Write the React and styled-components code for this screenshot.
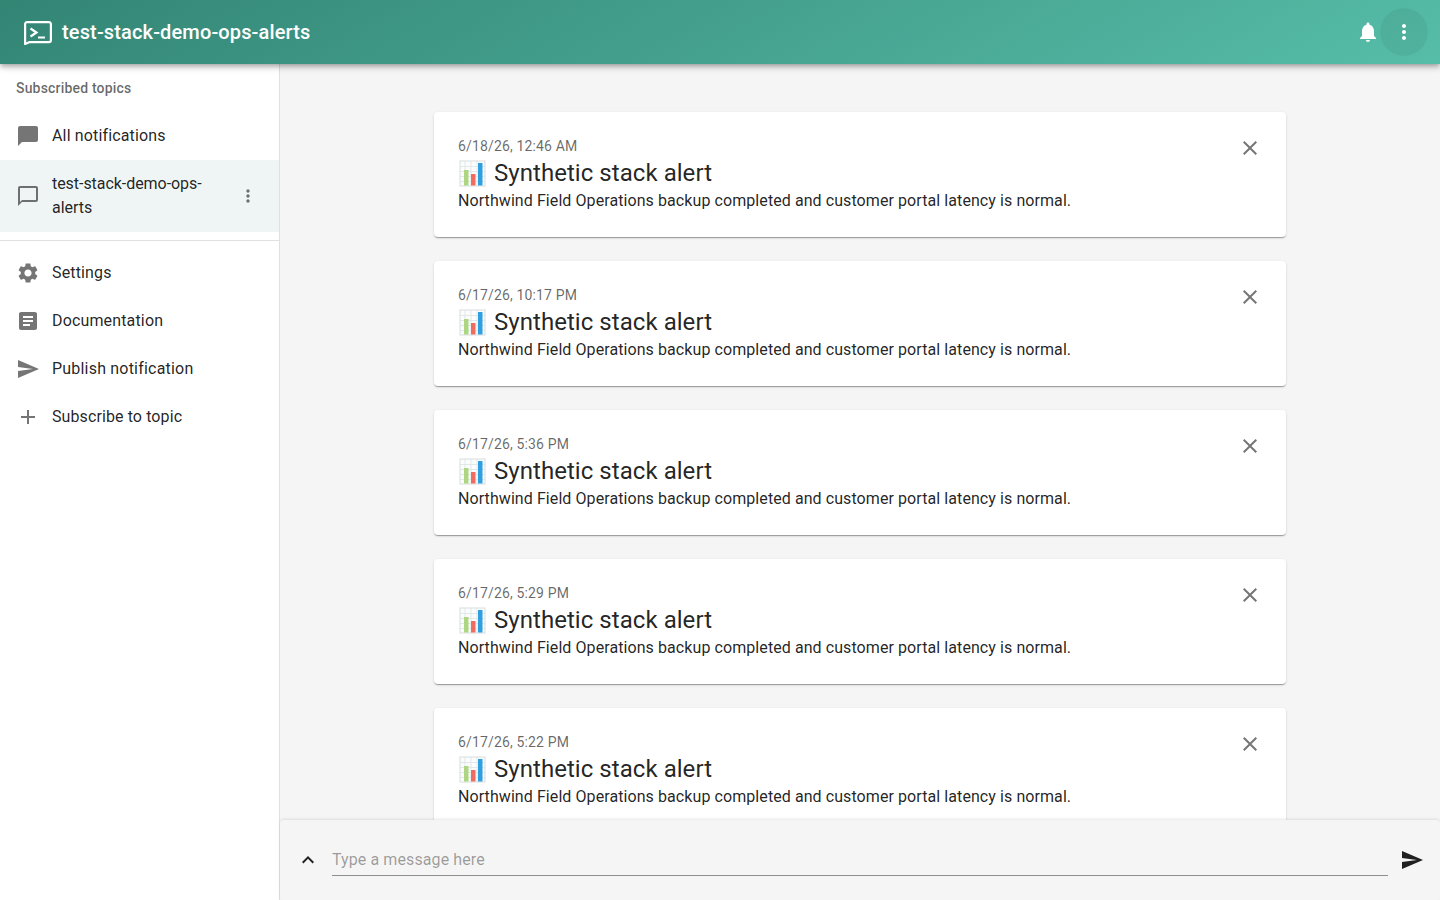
import styled, { createGlobalStyle } from "styled-components";

const paths = {
  chat: "M20 2H4c-1.1 0-1.99.9-1.99 2L2 22l4-4h14c1.1 0 2-.9 2-2V4c0-1.1-.9-2-2-2z",
  chatOutline: "M20 2H4c-1.1 0-2 .9-2 2v18l4-4h14c1.1 0 2-.9 2-2V4c0-1.1-.9-2-2-2zm0 14H6l-2 2V4h16v12z",
  more: "M12 8c1.1 0 2-.9 2-2s-.9-2-2-2-2 .9-2 2 .9 2 2 2zm0 2c-1.1 0-2 .9-2 2s.9 2 2 2 2-.9 2-2-.9-2-2-2zm0 6c-1.1 0-2 .9-2 2s.9 2 2 2 2-.9 2-2-.9-2-2-2z",
  settings: "M19.14 12.94c.04-.3.06-.61.06-.94 0-.32-.02-.64-.07-.94l2.03-1.58c.18-.14.23-.41.12-.61l-1.92-3.32c-.12-.22-.37-.29-.59-.22l-2.39.96c-.5-.38-1.03-.7-1.62-.94l-.36-2.54c-.04-.24-.24-.41-.48-.41h-3.84c-.24 0-.43.17-.47.41l-.36 2.54c-.59.24-1.13.57-1.62.94l-2.39-.96c-.22-.08-.47 0-.59.22L2.74 8.87c-.12.21-.08.47.12.61l2.03 1.58c-.05.3-.09.63-.09.94s.02.64.07.94l-2.03 1.58c-.18.14-.23.41-.12.61l1.92 3.32c.12.22.37.29.59.22l2.39-.96c.5.38 1.03.7 1.62.94l.36 2.54c.05.24.24.41.48.41h3.84c.24 0 .44-.17.47-.41l.36-2.54c.59-.24 1.13-.56 1.62-.94l2.39.96c.22.08.47 0 .59-.22l1.92-3.32c.12-.22.07-.47-.12-.61l-2.01-1.58zM12 15.6c-1.98 0-3.6-1.62-3.6-3.6s1.62-3.6 3.6-3.6 3.6 1.62 3.6 3.6-1.62 3.6-3.6 3.6z",
  article: "M19 3H5c-1.1 0-2 .9-2 2v14c0 1.1.9 2 2 2h14c1.1 0 2-.9 2-2V5c0-1.1-.9-2-2-2zm-5 14H7v-2h7v2zm3-4H7v-2h10v2zm0-4H7V7h10v2z",
  send: "M2.01 21 23 12 2.01 3 2 10l15 2-15 2z",
  add: "M19 13h-6v6h-2v-6H5v-2h6V5h2v6h6v2z",
  close: "M19 6.41 17.59 5 12 10.59 6.41 5 5 6.41 10.59 12 5 17.59 6.41 19 12 13.41 17.59 19 19 17.59 13.41 12z",
  bell: "M12 22c1.1 0 2-.9 2-2h-4c0 1.1.89 2 2 2zm6-6v-5c0-3.07-1.64-5.64-4.5-6.32V4c0-.83-.67-1.5-1.5-1.5s-1.5.67-1.5 1.5v.68C7.63 5.36 6 7.92 6 11v5l-2 2v1h16v-1l-2-2z",
  expandLess: "m12 8-6 6 1.41 1.41L12 10.83l4.59 4.58L18 14z",
};

const GlobalStyle = createGlobalStyle`
  html, body {
    margin: 0;
    height: 100%;
    overflow: hidden;
  }
  body {
    font-family: Roboto, "Liberation Sans", sans-serif;
    color: rgba(0, 0, 0, 0.87);
    background: #f5f5f5;
  }
  * {
    box-sizing: border-box;
  }
`;

const Page = styled.div`
  height: 100vh;
  display: flex;
  flex-direction: column;
`;

const AppBar = styled.header`
  height: 64px;
  flex-shrink: 0;
  display: flex;
  align-items: center;
  padding: 0 12px 0 24px;
  background: linear-gradient(150deg, #338574 0%, #56bda8 100%);
  color: #fff;
  position: relative;
  z-index: 5;
  box-shadow: 0 2px 4px -1px rgba(0, 0, 0, 0.2), 0 4px 5px 0 rgba(0, 0, 0, 0.14), 0 1px 10px 0 rgba(0, 0, 0, 0.12);
`;

const AppTitle = styled.h1`
  flex: 1;
  margin: 0 0 0 10px;
  font-size: 20px;
  font-weight: 500;
  line-height: 32px;
  letter-spacing: 0.14px;
`;

const BarButton = styled.button`
  width: 48px;
  height: 48px;
  border: 0;
  border-radius: 50%;
  padding: 0;
  display: flex;
  align-items: center;
  justify-content: center;
  color: #fff;
  background: ${(props) => (props.$active ? "rgba(0, 0, 0, 0.05)" : "transparent")};
  margin-right: ${(props) => props.$gap || 0}px;
`;

const Icon = styled.svg`
  width: ${(props) => props.$size || 24}px;
  height: ${(props) => props.$size || 24}px;
  fill: currentColor;
  flex-shrink: 0;
  display: block;
`;

const Body = styled.div`
  flex: 1;
  min-height: 0;
  display: flex;
`;

const Sidebar = styled.nav`
  width: 280px;
  flex-shrink: 0;
  background: #fff;
  border-right: 1px solid rgba(0, 0, 0, 0.12);
`;

const NavList = styled.div`
  padding-bottom: 8px;
`;

const Subheader = styled.div`
  height: 48px;
  line-height: 48px;
  padding-left: 16px;
  font-size: 14px;
  font-weight: 500;
  letter-spacing: 0.18px;
  color: rgba(0, 0, 0, 0.6);
`;

const NavItem = styled.div`
  display: flex;
  align-items: center;
  min-height: 48px;
  padding: ${(props) => (props.$selected ? "12px 16px" : "8px 16px")};
  background: ${(props) => (props.$selected ? "rgba(51, 133, 116, 0.08)" : "transparent")};
  color: rgba(0, 0, 0, 0.87);
`;

const NavIcon = styled.span`
  width: 36px;
  flex-shrink: 0;
  display: flex;
  color: rgba(0, 0, 0, 0.54);
`;

const NavText = styled.span`
  flex: 1;
  font-size: 16px;
  line-height: 24px;
  letter-spacing: ${(props) => props.$spacing ?? 0.15}px;
`;

const NavAction = styled.span`
  display: flex;
  color: rgba(0, 0, 0, 0.54);
  margin-right: 5px;
`;

const Divider = styled.hr`
  margin: 0;
  border: 0;
  border-top: 1px solid rgba(0, 0, 0, 0.12);
`;

const NavSection = styled.div`
  padding-top: 8px;
`;

const Main = styled.main`
  flex: 1;
  min-width: 0;
  display: flex;
  flex-direction: column;
`;

const MessageList = styled.div`
  flex: 1;
  min-height: 0;
  overflow: hidden;
  padding: 48px 24px 0;
  display: flex;
  flex-direction: column;
  align-items: center;
  gap: 24px;
`;

const Card = styled.article`
  width: 852px;
  flex-shrink: 0;
  padding: 24px;
  position: relative;
  background: #fff;
  border-radius: 4px;
  box-shadow: 0 2px 1px -1px rgba(0, 0, 0, 0.2), 0 1px 1px 0 rgba(0, 0, 0, 0.14), 0 1px 3px 0 rgba(0, 0, 0, 0.12);
`;

const Timestamp = styled.div`
  font-size: 14px;
  line-height: 20px;
  letter-spacing: 0.15px;
  color: rgba(0, 0, 0, 0.6);
`;

const Title = styled.div`
  display: flex;
  align-items: center;
  gap: 8px;
  font-size: 24px;
  line-height: 32px;
  height: 33px;
  letter-spacing: 0.05px;
`;

const Message = styled.div`
  font-size: 16px;
  line-height: 24px;
  letter-spacing: 0.08px;
`;

const CloseButton = styled.button`
  position: absolute;
  top: 16px;
  right: 16px;
  width: 40px;
  height: 40px;
  padding: 0;
  border: 0;
  background: transparent;
  display: flex;
  align-items: center;
  justify-content: center;
  color: rgba(0, 0, 0, 0.54);
`;

const MessageBar = styled.form`
  height: 80px;
  flex-shrink: 0;
  margin: 0;
  padding: 0 8px 0 16px;
  display: flex;
  align-items: center;
  position: relative;
  z-index: 2;
  background: #f5f5f5;
  border-radius: 4px;
  box-shadow: 0 -1px 3px rgba(0, 0, 0, 0.1);
`;

const BarIconButton = styled.button`
  width: ${(props) => props.$size}px;
  height: 40px;
  padding: 0;
  border: 0;
  background: transparent;
  flex-shrink: 0;
  display: flex;
  align-items: center;
  justify-content: center;
  color: rgba(0, 0, 0, 0.87);
`;

const MessageInput = styled.input`
  flex: 1;
  min-width: 0;
  height: 32px;
  margin: 0 4px 0 12px;
  padding: 4px 0 5px;
  border: 0;
  border-bottom: 1px solid rgba(0, 0, 0, 0.42);
  border-radius: 0;
  outline: 0;
  background: transparent;
  font: inherit;
  font-size: 16px;
  letter-spacing: 0.1px;
  color: rgba(0, 0, 0, 0.87);
  &::placeholder {
    color: rgba(0, 0, 0, 0.38);
    opacity: 1;
  }
`;

const topItems = [
  { label: "Settings", icon: paths.settings },
  { label: "Documentation", icon: paths.article },
  { label: "Publish notification", icon: paths.send, spacing: 0.2 },
  { label: "Subscribe to topic", icon: paths.add, spacing: 0.1 },
];

const notifications = [
  "6/18/26, 12:46 AM",
  "6/17/26, 10:17 PM",
  "6/17/26, 5:36 PM",
  "6/17/26, 5:29 PM",
  "6/17/26, 5:22 PM",
];

function MuiIcon({ d, size }) {
  return (
    <Icon $size={size} viewBox="0 0 24 24" aria-hidden="true">
      <path d={d} />
    </Icon>
  );
}

function Logo() {
  return (
    <svg width="28" height="26" viewBox="0 0 28 26" fill="none" aria-hidden="true">
      <path
        d="M3 3.1h22a1.9 1.9 0 0 1 1.9 1.9v16.3a1.9 1.9 0 0 1-1.9 1.9H5.2L1.1 25V5A1.9 1.9 0 0 1 3 3.1z"
        stroke="#fff"
        strokeWidth="2.2"
        strokeLinejoin="round"
      />
      <path d="M6.5 9.5 12.5 13.5 6.5 17.5" stroke="#fff" strokeWidth="2.2" />
      <path d="M14 18.5h7" stroke="#fff" strokeWidth="2" />
    </svg>
  );
}

function ChartEmoji() {
  return (
    <svg width="28" height="28" viewBox="0 0 28 28" aria-label="bar chart" style={{ flexShrink: 0 }}>
      <rect x="2" y="2" width="25" height="25" fill="#fbfcfc" stroke="#d5dde0" strokeWidth="1" />
      <path d="M2 7.5h25M2 12.5h25M2 17.5h25M2 22.5h25M7 2v25M13 2v25M19 2v25" stroke="#d9e1e4" strokeWidth="0.7" />
      <rect x="6" y="11" width="4.5" height="15.5" fill="#aed581" />
      <rect x="13" y="15" width="4.5" height="11.5" fill="#ef6c5f" />
      <rect x="20" y="4" width="4.5" height="22.5" fill="#2f9fe0" />
    </svg>
  );
}

function App() {
  return (
    <Page>
      <GlobalStyle />
      <AppBar>
        <Logo />
        <AppTitle>test-stack-demo-ops-alerts</AppTitle>
        <BarButton type="button" $gap={-12} aria-label="Notifications">
          <MuiIcon d={paths.bell} />
        </BarButton>
        <BarButton type="button" $active aria-label="More">
          <MuiIcon d={paths.more} />
        </BarButton>
      </AppBar>
      <Body>
        <Sidebar>
          <NavList>
            <Subheader>Subscribed topics</Subheader>
            <NavItem>
              <NavIcon>
                <MuiIcon d={paths.chat} />
              </NavIcon>
              <NavText>All notifications</NavText>
            </NavItem>
            <NavItem $selected>
              <NavIcon>
                <MuiIcon d={paths.chatOutline} />
              </NavIcon>
              <NavText $spacing={-0.05}>test-stack-demo-ops-alerts</NavText>
              <NavAction>
                <MuiIcon d={paths.more} size={20} />
              </NavAction>
            </NavItem>
          </NavList>
          <Divider />
          <NavSection>
            {topItems.map((item) => (
              <NavItem key={item.label}>
                <NavIcon>
                  <MuiIcon d={item.icon} />
                </NavIcon>
                <NavText $spacing={item.spacing}>{item.label}</NavText>
              </NavItem>
            ))}
          </NavSection>
        </Sidebar>
        <Main>
          <MessageList>
            {notifications.map((time) => (
              <Card key={time}>
                <CloseButton type="button" aria-label="Close">
                  <MuiIcon d={paths.close} />
                </CloseButton>
                <Timestamp>{time}</Timestamp>
                <Title>
                  <ChartEmoji />
                  Synthetic stack alert
                </Title>
                <Message>Northwind Field Operations backup completed and customer portal latency is normal.</Message>
              </Card>
            ))}
          </MessageList>
          <MessageBar>
            <BarIconButton type="button" $size={24} aria-label="Expand">
              <MuiIcon d={paths.expandLess} />
            </BarIconButton>
            <MessageInput placeholder="Type a message here" />
            <BarIconButton type="button" $size={40} aria-label="Send">
              <MuiIcon d={paths.send} />
            </BarIconButton>
          </MessageBar>
        </Main>
      </Body>
    </Page>
  );
}

export default App;
